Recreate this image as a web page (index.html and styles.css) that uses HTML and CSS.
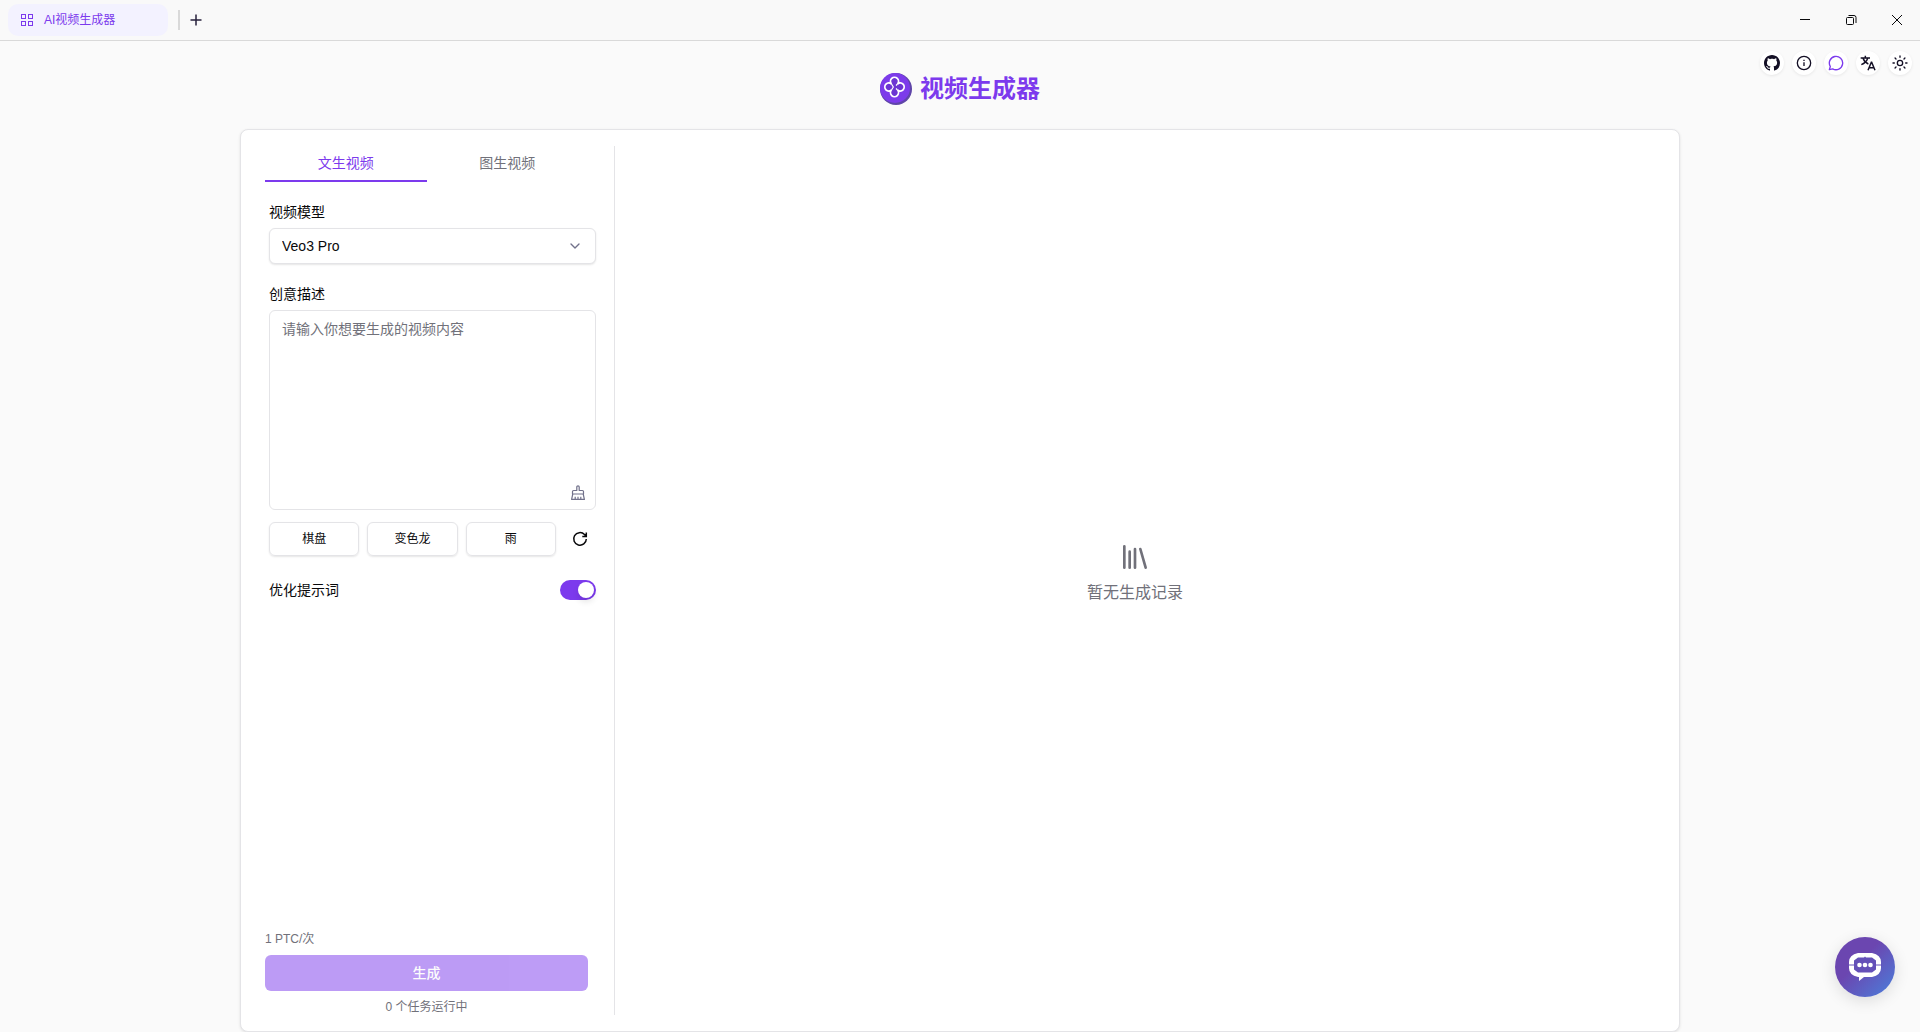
FILE: index.html
```
<!DOCTYPE html>
<html lang="zh-CN">
<head>
    <meta charset="UTF-8">
    <meta name="viewport" content="width=device-width, initial-scale=1.0">
    <title>AI视频生成器</title>
    <link rel="stylesheet" href="styles.css">
</head>
<body>
    <div class="titlebar">
        <a class="app-tab" href="#">
            <svg width="14" height="14" viewBox="0 0 14 14" fill="none" stroke="currentColor">
                <rect x="1.5" y="1.5" width="4" height="4"/>
                <rect x="8.5" y="1.5" width="4" height="4"/>
                <rect x="1.5" y="8.5" width="4" height="4"/>
                <rect x="8.5" y="8.5" width="4" height="4"/>
            </svg>
            <span>AI视频生成器</span>
        </a>
        <span class="separator"></span>
        <button class="new-tab" type="button" aria-label="新标签页">
            <svg width="12" height="12" viewBox="0 0 12 12" stroke="currentColor" stroke-width="1.5"><path d="M6 .5v11M.5 6h11"/></svg>
        </button>
        <div class="window-controls">
            <button type="button" aria-label="最小化">
                <svg width="12" height="12" viewBox="0 0 12 12" stroke="currentColor"><path d="M1 5.5h10"/></svg>
            </button>
            <button type="button" aria-label="还原">
                <svg width="12" height="12" viewBox="0 0 12 12" fill="none" stroke="currentColor"><rect x="1.5" y="3.5" width="7" height="7" rx="1"/><path d="M3.5 1.5h5.500a2 2 0 0 1 2 2V9"/></svg>
            </button>
            <button type="button" aria-label="关闭">
                <svg width="12" height="12" viewBox="0 0 12 12" stroke="currentColor"><path d="M1 1l10 10M11 1L1 11"/></svg>
            </button>
        </div>
    </div>

    <header class="header">
        <h1 class="brand">
            <svg width="32" height="32" viewBox="0 0 32 32" fill="none">
                <circle cx="16" cy="16" r="16" fill="#5f45a8"/>
                <circle cx="15" cy="15" r="15" fill="#7c3bea"/>
                <path d="M11.500 11a4 4 0 1 1 6 0a4 4 0 1 1 0 6a4 4 0 1 1 -6 0a4 4 0 1 1 0 -6z" fill="#6c35d2" stroke="#fff" stroke-width="1.800"/>
                <path d="M11.500 11l1.800 3-1.800 3M17.500 11l-1.500 1.500M17.500 17l-1.500-1.500" stroke="#fff" stroke-width="1.200"/>
            </svg>
            <span>视频生成器</span>
        </h1>
        <nav class="tools">
            <a class="tool" href="#" aria-label="GitHub">
                <svg width="16" height="16" viewBox="0 0 16 16" fill="currentColor"><path d="M8 0C3.580 0 0 3.580 0 8c0 3.540 2.290 6.530 5.470 7.590.4.070.55-.17.55-.38 0-.19-.01-.82-.01-1.490-2.010.37-2.530-.49-2.690-.94-.09-.23-.48-.94-.82-1.130-.28-.15-.68-.52-.01-.53.63-.01 1.080.58 1.230.82.72 1.210 1.870.87 2.330.66.07-.52.28-.87.51-1.070-1.780-.2-3.640-.89-3.640-3.950 0-.87.31-1.590.82-2.150-.08-.2-.36-1.020.08-2.120 0 0 .67-.21 2.200.82.64-.18 1.320-.27 2-.27s1.360.09 2 .27c1.530-1.040 2.200-.82 2.200-.82.44 1.100.16 1.920.08 2.120.51.56.82 1.270.82 2.150 0 3.070-1.870 3.750-3.650 3.950.29.25.54.73.54 1.480 0 1.070-.01 1.930-.01 2.200 0 .21.15.46.55.38A8.010 8.010 0 0 0 16 8c0-4.420-3.580-8-8-8z"/></svg>
            </a>
            <button class="tool" type="button" aria-label="关于">
                <svg width="16" height="16" viewBox="0 0 24 24" fill="none" stroke="currentColor" stroke-width="2"><circle cx="12" cy="12" r="10"/><path d="M12 16.500v-5.500M12 7v2"/></svg>
            </button>
            <button class="tool tool-chat" type="button" aria-label="消息">
                <svg width="16" height="16" viewBox="0 0 24 24" fill="none" stroke="currentColor" stroke-width="2" stroke-linejoin="round"><path d="M3.500 17.300A10 10 0 1 1 7 20.700L2 22z"/></svg>
            </button>
            <button class="tool" type="button" aria-label="语言">
                <svg width="16" height="16" viewBox="0 0 24 24" fill="none" stroke="currentColor" stroke-width="2.200"><path d="M1 4.500h14M8 1v3.500M11.500 5C10 10 6 13 2 14.500M4.500 5c1.500 4 4.500 7 8 8.500M12 23l5-12h.5l5 12M14 19h7"/></svg>
            </button>
            <button class="tool" type="button" aria-label="主题">
                <svg width="16" height="16" viewBox="0 0 24 24" fill="none" stroke="currentColor" stroke-width="2" stroke-linecap="round"><circle cx="12" cy="12" r="4"/><path d="M12 1.500v2M12 20.500v2M1.500 12h2M20.500 12h2M4.600 4.600L6 6M18 18l1.400 1.400M4.600 19.400L6 18M18 6l1.400-1.400"/></svg>
            </button>
        </nav>
    </header>

    <main class="card">
        <section class="sidebar">
            <div class="tabs" role="tablist">
                <button class="tab active" type="button" role="tab" aria-selected="true">文生视频</button>
                <button class="tab" type="button" role="tab" aria-selected="false">图生视频</button>
            </div>

            <form class="form" id="videoForm">
                <div class="field">
                    <label for="model">视频模型</label>
                    <div class="select-wrap">
                        <select id="model">
                            <option>Veo3 Pro</option>
                        </select>
                        <svg class="chevron" width="16" height="16" viewBox="0 0 24 24" fill="none" stroke="currentColor" stroke-width="2" stroke-linecap="round" stroke-linejoin="round"><path d="M6 9l6 6 6-6"/></svg>
                    </div>
                </div>

                <div class="field">
                    <label for="prompt">创意描述</label>
                    <div class="prompt-wrap">
                        <textarea id="prompt" placeholder="请输入你想要生成的视频内容"></textarea>
                        <button class="clear-btn" type="button" aria-label="清空">
                            <svg width="16" height="16" viewBox="0 0 16 16" fill="none" stroke="currentColor" stroke-width="1.200" stroke-linejoin="round"><path d="M6.800 5.500V2a1.200 1.200 0 0 1 2.400 0v3.500H12.500a1 1 0 0 1 1 1V9h-11V6.500a1 1 0 0 1 1-1zM2.800 9L1.600 14.400h12.800L13.200 9M5.200 14.400v-2.600M8 14.400v-2.600M10.800 14.400v-2.600"/></svg>
                        </button>
                    </div>
                    <div class="samples">
                        <button class="sample" type="button">棋盘</button>
                        <button class="sample" type="button">变色龙</button>
                        <button class="sample" type="button">雨</button>
                        <button class="refresh" type="button" aria-label="换一批">
                            <svg width="16" height="16" viewBox="0 0 16 16" fill="none" stroke="currentColor" stroke-width="1.500"><path d="M14.300 8A6.300 6.300 0 1 1 12.500 3.500L14.300 5.300M14.300 1.500v4h-4"/></svg>
                        </button>
                    </div>
                </div>

                <div class="switch-row">
                    <label for="optimize">优化提示词</label>
                    <input class="switch" type="checkbox" id="optimize" checked>
                </div>
            </form>

            <div class="submit-area">
                <p>1 PTC/次</p>
                <button class="generate" type="submit" form="videoForm" disabled>生成</button>
                <p class="running">0 个任务运行中</p>
            </div>
        </section>

        <section class="records">
            <svg width="32" height="32" viewBox="0 0 24 24" fill="none" stroke="currentColor" stroke-width="2" stroke-linecap="round"><path d="M4 4v16M8 8v12M12 6v14M16 6l4 14"/></svg>
            <p>暂无生成记录</p>
        </section>
    </main>

    <button class="chat-fab" type="button" aria-label="在线客服">
        <svg width="34" height="28" viewBox="0 0 34 28">
            <path d="M10 0h14q9 2 9 9v6q0 7-9 9H16l-5 4v-4h-1q-9-2-9-9V9q0-7 9-9z" fill="#fff"/>
            <path d="M10 4.500h6l1-1 1 1h6l4 3v9l-4 3H10l-4-3v-9z" fill="#6450b8"/>
            <path d="M0 12h6M28 12h6" stroke="#6450b8"/>
            <g fill="#fff"><circle cx="11.500" cy="12" r="2.300"/><circle cx="17" cy="12" r="2.300"/><circle cx="22.500" cy="12" r="2.300"/></g>
        </svg>
    </button>
</body>
</html>
```
FILE: styles.css
```
* {
    box-sizing: border-box;
}
body {
    margin: 0;
    min-height: 100vh;
    display: flex;
    flex-direction: column;
    font-family: "Liberation Sans", Arial, "Noto Sans CJK SC", sans-serif;
    font-size: 14px;
    line-height: 20px;
    color: #09090b;
    background: #fafafa;
}
button, select, textarea {
    font: inherit;
    color: inherit;
}
button {
    display: flex;
    align-items: center;
    justify-content: center;
    padding: 0;
    border: none;
    background: none;
    cursor: pointer;
}
p {
    margin: 0;
}
svg {
    flex-shrink: 0;
}

/* window title bar */
.titlebar {
    display: flex;
    align-items: center;
    height: 41px;
    padding-left: 8px;
    border-bottom: 1px solid #d9d9d9;
    background: #f9f9f9;
}
.app-tab {
    display: flex;
    align-items: center;
    gap: 10px;
    width: 160px;
    height: 32px;
    padding: 0 12px;
    border-radius: 10px;
    font-size: 12px;
    color: #7c3aed;
    background: #f3f2ff;
    text-decoration: none;
}
.separator {
    width: 2px;
    height: 20px;
    margin-left: 10px;
    background: #d9d9d9;
}
.new-tab {
    width: 32px;
    height: 32px;
    color: #27213c;
}
.window-controls {
    display: flex;
    margin-left: auto;
}
.window-controls button {
    width: 46px;
    height: 40px;
}

/* header */
.header {
    display: grid;
    grid-template-columns: 1fr auto 1fr;
    height: 88px;
    padding: 0 8px;
}
.brand {
    grid-column: 2;
    display: flex;
    align-items: center;
    gap: 8px;
    height: 96px;
    margin: 0;
    font-size: 24px;
    line-height: 32px;
    color: #7c3aed;
}
.tools {
    display: flex;
    justify-content: flex-end;
    gap: 8px;
    padding-top: 10px;
}
.tool {
    display: flex;
    align-items: center;
    justify-content: center;
    width: 24px;
    height: 24px;
    border-radius: 50%;
    color: #130f25;
    background: #fff;
    box-shadow: 0 1px 3px rgba(0, 0, 0, 0.08);
}
.tool-chat {
    color: #7c3aed;
}

/* main card */
.card {
    flex: 1;
    display: grid;
    grid-template-columns: 358px 1fr;
    width: 75%;
    min-width: 720px;
    margin: 0 auto;
    padding: 16px;
    border: 1px solid #e4e4e7;
    border-radius: 8px;
    background: #fff;
    box-shadow: 0 1px 3px rgba(0, 0, 0, 0.1);
}
.sidebar {
    display: flex;
    flex-direction: column;
    padding-left: 8px;
    border-right: 1px solid #e4e4e7;
}
.tabs {
    display: grid;
    grid-template-columns: 1fr 1fr;
    margin-right: 26px;
}
.tab {
    height: 36px;
    border-bottom: 2px solid transparent;
    color: #71717a;
}
.tab.active {
    color: #7c3aed;
    border-color: #7c3aed;
}
.form {
    flex: 1;
    padding: 20px 18px 24px 4px;
}
.field {
    margin-bottom: 20px;
}
.field label {
    display: block;
    margin-bottom: 6px;
}
.select-wrap, .prompt-wrap {
    position: relative;
}
select {
    display: block;
    appearance: none;
    width: 100%;
    height: 36px;
    padding: 0 12px;
    border: 1px solid #e4e4e7;
    border-radius: 6px;
    background: #fff;
    box-shadow: 0 1px 2px rgba(0, 0, 0, 0.1);
}
.chevron {
    position: absolute;
    top: 10px;
    right: 13px;
    color: #71718a;
    pointer-events: none;
}
textarea {
    display: block;
    width: 100%;
    height: 200px;
    padding: 8px 12px;
    border: 1px solid #e4e4e7;
    border-radius: 6px;
    background: #fff;
    resize: none;
}
textarea::placeholder {
    color: #71717a;
}
.clear-btn {
    position: absolute;
    right: 10px;
    bottom: 9px;
    color: #71718a;
}
.samples {
    display: grid;
    grid-template-columns: 1fr 1fr 1fr 32px;
    gap: 8px;
    margin-top: 12px;
}
.sample {
    height: 34px;
    border: 1px solid #e4e4e7;
    border-radius: 6px;
    font-size: 12px;
    box-shadow: 0 1px 2px rgba(0, 0, 0, 0.1);
}
.switch-row {
    display: flex;
    align-items: center;
    justify-content: space-between;
    padding-top: 4px;
}
.switch {
    appearance: none;
    display: flex;
    align-items: center;
    width: 36px;
    height: 20px;
    margin: 0;
    padding: 2px;
    border-radius: 10px;
    background: #d4d4d8;
    cursor: pointer;
}
.switch::before {
    content: "";
    width: 16px;
    height: 16px;
    border-radius: 50%;
    background: #fff;
    box-shadow: 0 4px 6px rgba(0, 0, 0, 0.1);
}
.switch:checked {
    justify-content: flex-end;
    background: #7c3aed;
}
.submit-area {
    padding-right: 26px;
    font-size: 12px;
    line-height: 16px;
    color: #71717a;
}
.generate {
    width: 100%;
    height: 36px;
    margin: 8px 0;
    border-radius: 6px;
    font-size: 14px;
    font-weight: 500;
    color: #fafafa;
    background: #7c3aed;
    opacity: 0.5;
}
.running {
    text-align: center;
}
.records {
    display: flex;
    flex-direction: column;
    align-items: center;
    justify-content: center;
    gap: 8px;
    padding: 0 8px 16px 0;
    font-size: 16px;
    line-height: 24px;
    color: #71717a;
}

/* support button */
.chat-fab {
    position: fixed;
    right: 25px;
    bottom: 35px;
    width: 60px;
    height: 60px;
    border-radius: 50%;
    background: linear-gradient(135deg, #6b46b0 40%, #4a80dc);
    box-shadow: 0 4px 16px rgba(0, 0, 0, 0.12);
}
```
